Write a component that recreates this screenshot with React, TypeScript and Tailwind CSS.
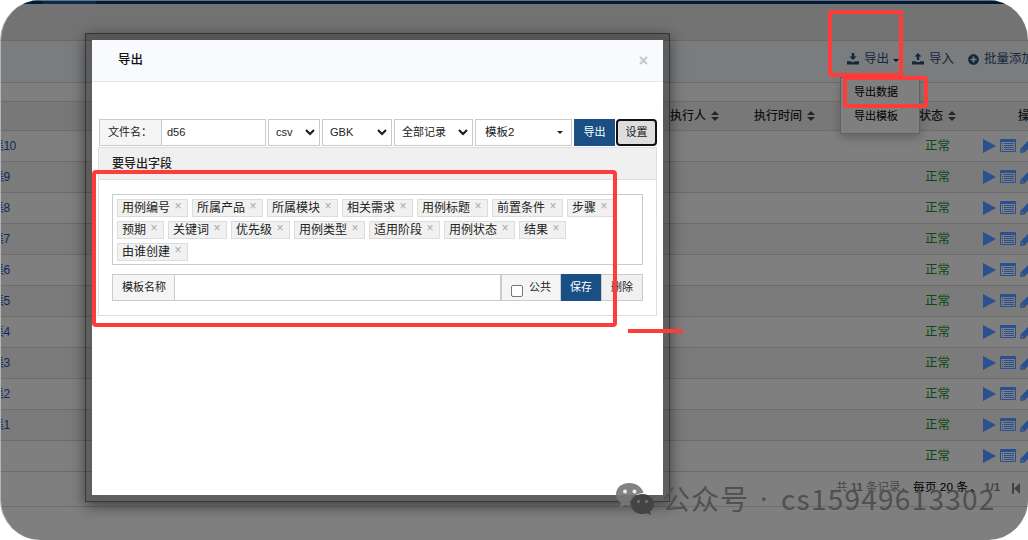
import React from "react";
import { FaPlusCircle } from "react-icons/fa";

const rows = ["集10", "集9", "集8", "集7", "集6", "集5", "集4", "集3", "集2", "集1", ""];

const fields = [
  ["用例编号", "所属产品", "所属模块", "相关需求", "用例标题", "前置条件", "步骤"],
  ["预期", "关键词", "优先级", "用例类型", "适用阶段", "用例状态", "结果"],
  ["由谁创建"],
];

function TrayIcon({ up = false }: { up?: boolean }) {
  return (
    <svg width="12" height="12" viewBox="0 0 12 12" className="shrink-0" fill="currentColor">
      <path d={up ? "M6 0L9.5 3.500H7.2V7H4.8V3.500H2.500Z" : "M4.8 0H7.2V3.5H9.500L6 7L2.500 3.5H4.8Z"} />
      <path d={up ? "M0 8.2H4V9H8V8.2H12V11.5H0Z" : "M0 8.2H4L6 9.6L8 8.2H12V11.5H0Z"} />
    </svg>
  );
}

function SortIcon() {
  return (
    <svg width="8" height="10" viewBox="0 0 8 10" fill="#252525">
      <path d="M4 0L8 4H0ZM4 10L0 6H8Z" />
    </svg>
  );
}

function RowActions() {
  return (
    <div className="flex w-[45px] shrink-0 items-center gap-[4px] overflow-hidden text-[#2b508f]">
      <svg width="13" height="14" viewBox="0 0 13 14" className="shrink-0" fill="currentColor">
        <path d="M0 0L13 7L0 14Z" />
      </svg>
      <svg width="16" height="14" viewBox="0 0 16 14" className="shrink-0" fill="currentColor">
        <path
          fillRule="evenodd"
          d="M1 0H15Q16 0 16 1V12Q16 13 15 13H1Q0 13 0 12V1Q0 0 1 0ZM1 3V12H15V3ZM2 4H3V5H2ZM4 4H14V5H4ZM2 6H3V7H2ZM4 6H14V7H4ZM2 8H3V9H2ZM4 8H14V9H4ZM2 10H3V11H2ZM4 10H14V11H4Z"
        />
      </svg>
      <svg width="14" height="14" viewBox="0 0 14 14" className="shrink-0" fill="currentColor">
        <path fillRule="evenodd" d="M0 14L0.500 9.500L8 2L12 6L4.500 13.500ZM1.600 12.400L3.400 12L2 10.600ZM8.800 1.200L10 0Q11 -0.500 12 0.500L13.500 2Q14.300 3 13.500 4L12.800 5.200Z" />
      </svg>
    </div>
  );
}

function Chevron() {
  return (
    <svg width="10" height="7" viewBox="0 0 10 7" fill="none" stroke="#1c1c1c" strokeWidth="2.1">
      <path d="M1 1L5 5L9 1" />
    </svg>
  );
}

function SelectBox({ label, className }: { label: string; className: string }) {
  return (
    <div className={`flex h-[27px] items-center justify-between border border-[#cbcbcb] bg-white pl-[7px] pr-[4px] ${className}`}>
      <span>{label}</span>
      <Chevron />
    </div>
  );
}

function Backdrop() {
  return (
    <div className="flex h-[540px] w-full flex-col text-[12px] leading-none text-[#111]">
      <div className="flex h-[4px] shrink-0 border-t border-[#65717d] bg-[#021c38]">
        <div className="ml-[43px] w-[53px] bg-[#0b2d4d]" />
      </div>
      <div className="h-[37px] shrink-0 border-b border-[#696969] bg-[#737373]" />
      <div className="flex h-[42px] shrink-0 items-center border-b border-[#6b6b6c] bg-[#7b7c7e] pb-[5px] pl-[847px] text-[12.5px] text-[#14283c]">
        <TrayIcon />
        <span className="ml-[5px] shrink-0">导出</span>
        <span className="ml-[4px] mt-[3px] shrink-0 border-x-[3px] border-t-[3px] border-x-transparent border-t-[#111]" />
        <span className="ml-[13px] flex shrink-0"><TrayIcon up /></span>
        <span className="ml-[5px] shrink-0">导入</span>
        <FaPlusCircle size={11} className="ml-[14px] shrink-0" />
        <span className="ml-[5px] shrink-0 whitespace-nowrap">批量添加</span>
      </div>
      <div className="h-[19px] shrink-0 border-b border-[#6c6c6c] bg-[#7f7f7f]" />
      <div className="flex h-[29px] shrink-0 items-center border-b border-[#6c6c6c] bg-[#787878] pl-[670px] font-medium">
        <div className="flex w-[84px] shrink-0 items-center gap-[5px]">执行人 <SortIcon /></div>
        <div className="flex w-[165px] shrink-0 items-center gap-[5px] whitespace-nowrap">执行时间 <SortIcon /></div>
        <div className="flex w-[99px] shrink-0 items-center gap-[5px]">状态 <SortIcon /></div>
        <span className="shrink-0">操作</span>
      </div>
      {rows.map((label, i) => (
        <div key={i} className={`flex h-[31px] shrink-0 items-center justify-between border-b border-[#6c6c6c] ${i % 2 ? "bg-[#7b7b7b]" : "bg-[#7f7f7f]"}`}>
          <span className="-ml-[8px] tracking-[-0.6px] text-[#0b2c5c]">{label}</span>
          <div className="flex items-center">
            <span className="w-[58px] text-[12.5px] text-[#0b4d10]">正常</span>
            <RowActions />
          </div>
        </div>
      ))}
      <div className="flex h-[35px] shrink-0 items-center border-b border-[#6c6c6c] bg-[#7f7f7f] pb-[2px] pl-[836px] text-[11.5px]">
        <span className="w-[77px] shrink-0 whitespace-nowrap text-[#484848]">共 <b>11</b> 条记录，</span>
        <span className="shrink-0 whitespace-nowrap text-[11.8px] text-black">每页 20 条</span>
        <span className="ml-px mt-[4px] shrink-0 border-x-[3px] border-b-[3px] border-x-transparent border-b-black" />
        <span className="ml-[9px] shrink-0 font-bold text-[#444]">1/1</span>
        <svg width="8" height="11" viewBox="0 0 8 11" className="ml-[12px] shrink-0" fill="#424242">
          <path d="M0 0H2V11H0ZM8 0V11L2 5.500Z" />
        </svg>
      </div>
      <div className="flex-1 bg-[#7f7f7f]" />
    </div>
  );
}

function ExportDialog() {
  return (
    <div className="absolute left-[84px] top-[33px] h-[469px] w-[585px] border border-black/40 bg-black/25 p-[6px] shadow-[0_4px_14px_rgba(0,0,0,0.5)]">
      <div className="h-full bg-white text-[11px] leading-none text-[#222]">
        <div className="flex h-[42px] items-center justify-between border-b border-[#e5e5e5] bg-[#f8fafe] pl-[26px] pr-[15px]">
          <span className="text-[12.5px] font-medium text-[#111]">导出</span>
          <span className="text-[16px] font-bold text-[#c2c4c7]">×</span>
        </div>
        <div className="px-[6px] pt-[37px]">
          <div className="ml-px flex h-[27px]">
            <div className="flex w-[63px] items-center border border-[#cbcbcb] bg-[#f5f5f5] pl-[8px]">文件名：</div>
            <div className="mr-[2px] flex w-[104px] items-center border border-l-0 border-[#cbcbcb] pl-[5px]">d56</div>
            <SelectBox label="csv" className="mr-[2px] w-[52px]" />
            <SelectBox label="GBK" className="mr-[2px] w-[70px]" />
            <SelectBox label="全部记录" className="mr-[2px] w-[79px]" />
            <div className="mr-[2px] flex w-[97px] items-center justify-between border border-[#cbcbcb] pl-[9px] pr-[8px] text-[11.5px]">
              模板2
              <span className="border-x-[3px] border-t-[3px] border-x-transparent border-t-[#222]" />
            </div>
            <div className="flex w-[41px] items-center justify-center bg-[#1a4f85] text-white">导出</div>
            <div className="ml-px flex w-[41px] items-center justify-center rounded-[4px] border-2 border-[#111] bg-[#ddd]">设置</div>
          </div>
          <div className="mt-px h-[169px] border border-[#ddd]">
            <div className="flex h-[32px] items-center border-b border-[#ddd] bg-[#f0f0f0] pl-[13px] text-[12px] font-medium">要导出字段</div>
            <div className="px-[13px] pt-[14px]">
              <div className="h-[71px] border border-[#cbcbcb] px-[4px] pt-[4px] text-[12px]">
                {fields.map((line, i) => (
                  <div key={i} className="mb-[4px] flex h-[18px] gap-[4px]">
                    {line.map((name) => (
                      <div key={name} className="flex shrink-0 items-center border border-[#ddd] bg-[#f1f1f1] pb-px pl-[4px] pr-[5px]">
                        {name}
                        <span className="mb-[3px] ml-[4px] w-[8px] text-center text-[12px] leading-none text-[#aaa]">×</span>
                      </div>
                    ))}
                  </div>
                ))}
              </div>
              <div className="mt-[9px] flex h-[27px]">
                <div className="flex w-[63px] items-center border border-[#cbcbcb] bg-[#f5f5f5] pl-[9px]">模板名称</div>
                <div className="w-[325px] border-y border-[#cbcbcb]" />
                <div className="flex w-[61px] items-center border border-l-2 border-[#cbcbcb] bg-[#f5f5f5] pl-[9px]">
                  <span className="mt-[7px] h-[12px] w-[12px] rounded-[2px] border border-[#767676] bg-white" />
                  <span className="ml-[6px]">公共</span>
                </div>
                <div className="flex w-[40px] items-center justify-center bg-[#1a4f85] text-white">保存</div>
                <div className="flex w-[42px] items-center justify-center border border-[#cbcbcb] bg-[#f0f0f0]">删除</div>
              </div>
            </div>
          </div>
        </div>
      </div>
    </div>
  );
}

function Watermark() {
  return (
    <div className="absolute left-[614px] top-[480px] flex h-[36px] items-center whitespace-nowrap font-['Noto_Sans_CJK_SC',sans-serif] text-[28px] leading-none text-[#505050]">
      <svg width="40" height="34" viewBox="0 0 40 34" className="shrink-0">
        <path fill="#777" fillOpacity="0.92" d="M14.500 2C6 2 1 7 1 13.500C1 17 3 20 6 22L5 27L10 24Q13 25 15 24.800C14 17 21 12 28.500 12C27 6 21 2 14.500 2Z" />
        <circle cx="10" cy="10.500" r="2" fill="#eee" /><circle cx="19.500" cy="10.500" r="2" fill="#eee" />
        <path fill="#444" d="M27.500 13C20.500 13 16 17.500 16 23C16 29 21 33 27.500 33Q30 33 32 32.200L36 34L35 30.500C37.500 29 39 26 39 23C39 17.500 34 13 27.500 13Z" />
        <circle cx="23.500" cy="20.500" r="1.500" fill="#777" /><circle cx="31.500" cy="20.500" r="1.500" fill="#777" />
      </svg>
      <span className="ml-[7px] w-[98px] tracking-[1px]">公众号</span>
      <span className="w-[21px] font-['Noto_Sans',sans-serif]">·</span>
      <span className="tracking-[1.25px]">cs15949613302</span>
    </div>
  );
}

export default function App() {
  return (
    <div className="h-[540px] w-[1028px] overflow-hidden bg-white font-['Liberation_Sans','Noto_Sans_CJK_SC',sans-serif]">
      <div className="relative h-full overflow-hidden rounded-[40px] border-l border-[#b5b5b5]">
        <div className="-ml-px"><Backdrop /></div>
        <div className="absolute left-[839px] top-[77px] flex h-[57px] w-[80px] flex-col border border-[#626262] bg-[#7f7f7f] pl-[13px] pt-[9px] text-[11px] leading-none shadow-[0_4px_9px_rgba(0,0,0,0.22)]">
          <span className="h-[24px]">导出数据</span>
          <span>导出模板</span>
        </div>
        <ExportDialog />
        <Watermark />
        <div className="absolute left-[827px] top-[10px] h-[67px] w-[75px] rounded-[4px] border-4 border-[#fe3c3a]" />
        <div className="absolute left-[842px] top-[76px] h-[32px] w-[85px] rounded-[4px] border-4 border-[#fe3c3a]" />
        <div className="absolute left-[91px] top-[170px] h-[157px] w-[525px] rounded-[4px] border-4 border-[#fe3c3a]" />
        <div className="absolute left-[627px] top-[329px] h-[4px] w-[55px] bg-[#fe3c3a]" />
      </div>
    </div>
  );
}
